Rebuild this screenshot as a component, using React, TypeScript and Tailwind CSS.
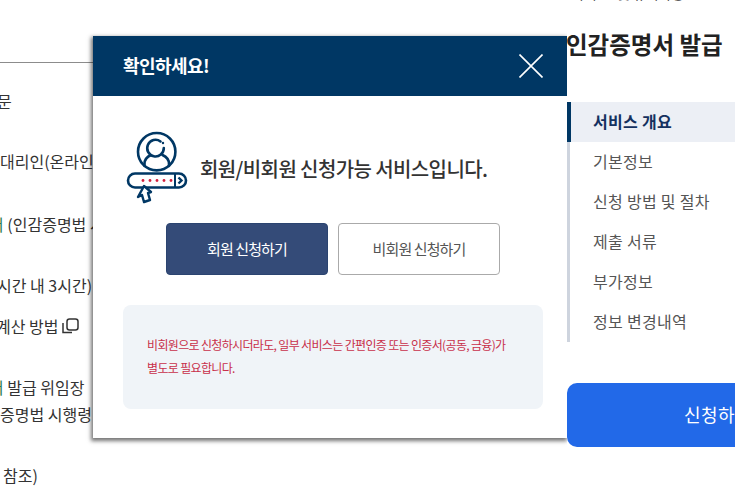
const kr = "font-['Noto_Sans_CJK_KR','Noto_Sans',sans-serif]";

const sideMenu = ["서비스 개요", "기본정보", "신청 방법 및 절차", "제출 서류", "부가정보", "정보 변경내역"];

function LoginIcon() {
  return (
    <svg width="80" height="85" viewBox="0 0 80 85" fill="none" stroke="#003764" strokeWidth="2.6" className="shrink-0">
      <circle cx="36.7" cy="26.7" r="18.7" />
      <path d="M40.5 16.5a8.3 8.3 0 1 0 3.3 6.5" strokeLinecap="round" />
      <circle cx="43" cy="18" r="1.2" fill="#003764" stroke="none" />
      <path d="M31 30c-3.5 1.5-6.5 4-6.5 9v2M42.5 30c3.5 1.5 6.5 4 6.5 9v2" strokeLinecap="round" />
      <path d="M15 48.5a7 7 0 0 0 0 14h44a7 7 0 0 0 0-14z" />
      <path d="M55 49v13" strokeWidth="2" />
      <path d="M58.5 52.5l3 3-3 3" strokeWidth="2.4" />
      <g fill="#d4213d" stroke="none">
        <circle cx="23" cy="55.5" r="1.4" />
        <circle cx="30" cy="55.5" r="1.4" />
        <circle cx="37" cy="55.5" r="1.4" />
        <circle cx="44" cy="55.5" r="1.4" />
        <circle cx="51" cy="55.5" r="1.4" />
      </g>
      <path d="M24 61l7 6-3 1 2 7-6 2-2-7-4 2z" fill="#fff" strokeWidth="2.4" strokeLinejoin="round" />
    </svg>
  );
}

function CopyIcon() {
  return (
    <svg width="18" height="18" viewBox="0 0 18 18" fill="none" stroke="#333" strokeWidth="1.5" className="ml-[3px] shrink-0">
      <rect x="6" y="2" width="11" height="11" rx="2.5" />
      <path d="M2 6V15.5H11" />
    </svg>
  );
}

export default function App() {
  return (
    <div className={`relative flex h-[490px] w-[735px] overflow-hidden bg-white ${kr}`}>
      {/* 왼쪽 본문: 모달 뒤로 잘림 */}
      <div className="w-[567px] shrink-0 overflow-hidden text-[16px] leading-[22px] text-[#333]">
        <div className="mt-[62px] h-px bg-[#8c8c8c]" />
        <p className="mt-[27px] -ml-[3px]">문</p>
        <p className="mt-[38px] whitespace-nowrap">대리인(온라인 신청)</p>
        <p className="mt-[41px] -ml-[11px] whitespace-nowrap"><span className="text-[#2e7d4f]">서</span> (인감증명법 시행령)</p>
        <p className="mt-[39px] -ml-[3px] whitespace-nowrap">시간 내 3시간)</p>
        <div className="mt-[19px] -ml-[4px] flex items-center whitespace-nowrap">계산 방법<CopyIcon /></div>
        <p className="mt-[39px] -ml-[11px] whitespace-nowrap"><span className="text-[#2e7d4f]">서</span> 발급 위임장</p>
        <p className="mt-[5px] whitespace-nowrap">증명법 시행령</p>
        <p className="mt-[39px] ml-[3px] whitespace-nowrap">참조)</p>
      </div>

      {/* 오른쪽 사이드: 모달 그림자 위에 놓임 */}
      <div className="relative z-10 flex w-[302px] shrink-0 flex-col bg-white">
        <p className="-mt-[17px] h-[20px] whitespace-nowrap pl-[8px] text-[14px] leading-[20px] text-[#555]">수수료 및 유의사항</p>
        <h2 className="mt-[27px] -ml-px whitespace-nowrap text-[23.5px] font-bold leading-[28px] text-[#222]">인감증명서 발급</h2>
        <ul className="mt-[44px] w-[168px] border-l-[3px] border-[#ced4de] text-[16px] tracking-[0.3px] text-[#555]">
          {sideMenu.map((label, i) => (
            <li
              key={label}
              className={
                i === 0
                  ? "-ml-[3px] flex h-10 items-center border-l-4 border-[#003764] bg-[#eceff5] pb-[2px] pl-[22px] font-bold text-[#14315f]"
                  : "flex h-10 items-center pb-[2px] pl-[23px]"
              }
            >
              {label}
            </li>
          ))}
        </ul>
        <button className="mt-[41px] h-16 w-full rounded-[10px] bg-[#2269e8] pb-[2px] text-[18px] tracking-[0.5px] text-white">신청하기</button>
      </div>

      {/* 모달 */}
      <div className="absolute left-[93px] top-[36px] h-[402px] w-[474px] bg-white shadow-[-1px_2px_4px_1px_rgba(0,0,0,0.55)]">
        <div className="flex h-[60px] items-center justify-between bg-[#003764] pl-[30px] pr-[24px]">
          <h3 className="pb-[2px] text-[18px] font-bold tracking-[-0.03em] text-white">확인하세요!</h3>
          <svg width="24" height="24" viewBox="0 0 24 24" stroke="#fff" strokeWidth="1.6" fill="none">
            <path d="M.5.5l23 23M23.5.5l-23 23" />
          </svg>
        </div>
        <div className="flex flex-col px-[30px]">
          <div className="mt-[29px] -ml-[3px] flex items-start">
            <LoginIcon />
            <p className="mt-[30px] whitespace-nowrap text-[20px] font-medium leading-[28px] tracking-[-0.03em] text-[#333]">
              회원/비회원 신청가능 서비스입니다.
            </p>
          </div>
          <div className="mt-[13px] flex justify-center gap-[10px] pl-[6px]">
            <button className="h-[52px] w-[162px] rounded-[4px] border border-[#2b4470] bg-[#344b78] text-[15px] tracking-[-0.06em] text-white">회원 신청하기</button>
            <button className="h-[52px] w-[162px] rounded-[4px] border border-[#aaa] bg-white text-[15px] tracking-[-0.06em] text-[#555]">비회원 신청하기</button>
          </div>
          <div className="mt-[30px] h-[104px] w-[420px] rounded-lg bg-[#f0f4f8] px-6 pt-[28px] text-[12px] leading-[23px] tracking-[-0.055em] text-[#c8304a]">
            비회원으로 신청하시더라도, 일부 서비스는 간편인증 또는 인증서(공동, 금융)가<br />별도로 필요합니다.
          </div>
        </div>
      </div>
    </div>
  );
}
